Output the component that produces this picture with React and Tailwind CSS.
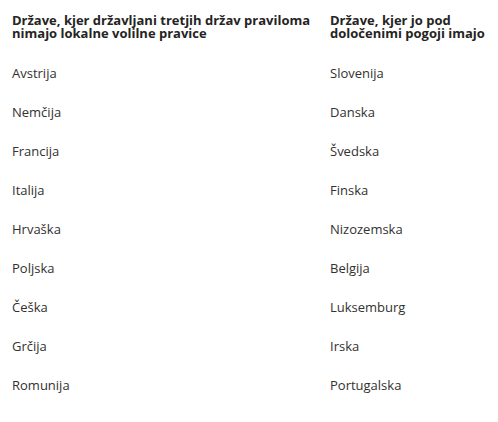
const left = ['Avstrija', 'Nemčija', 'Francija', 'Italija', 'Hrvaška', 'Poljska', 'Češka', 'Grčija', 'Romunija']
const right = ['Slovenija', 'Danska', 'Švedska', 'Finska', 'Nizozemska', 'Belgija', 'Luksemburg', 'Irska', 'Portugalska']

export default function App() {
  return (
    <div className="w-[498px] h-[422px] bg-white font-['Open_Sans',sans-serif] text-[#323130]">
      <div className="grid grid-cols-[318px_1fr] pl-3">
        <div className="pt-[14px] pr-3 h-[54px] text-[13px] leading-[13px] font-bold text-[#252423]">
          Države, kjer državljani tretjih držav praviloma nimajo lokalne volilne pravice
        </div>
        <div className="pt-[14px] h-[54px] text-[13px] leading-[13px] font-bold text-[#252423]">
          Države, kjer jo pod določenimi pogoji imajo
        </div>
        {left.map((name, i) => (
          <div key={name} className="contents">
            <div className="h-[39px] flex items-center text-[13px]">{name}</div>
            <div className="h-[39px] flex items-center text-[13px]">{right[i]}</div>
          </div>
        ))}
      </div>
    </div>
  )
}
